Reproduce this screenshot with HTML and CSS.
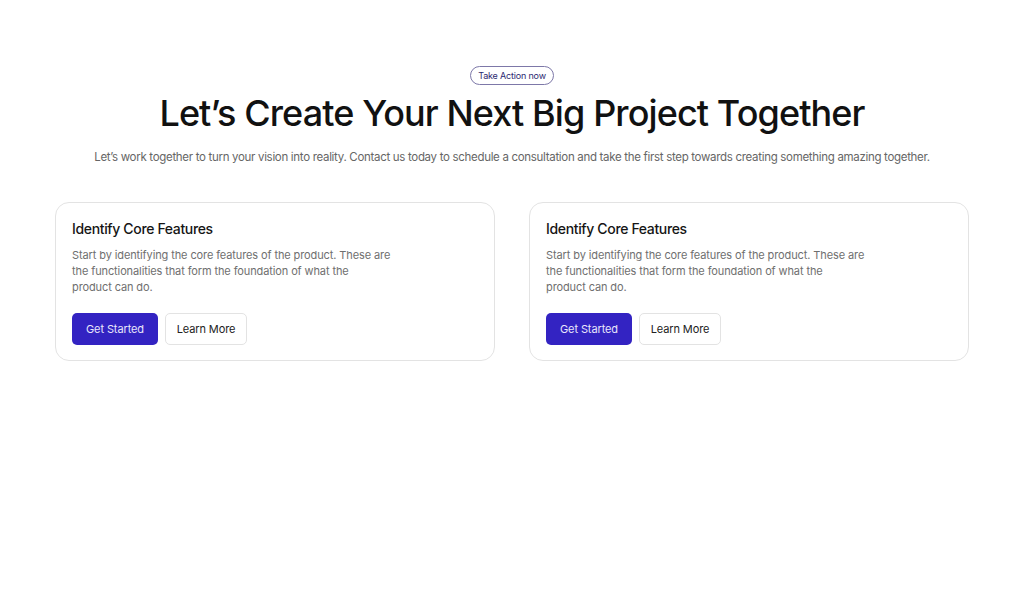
FILE: index.html
```html
<!DOCTYPE html>
<html lang="en">
<head>
<meta charset="utf-8">
<title>Let's Create</title>
<link rel="stylesheet" href="styles.css">
</head>
<body>
<main class="page">
  <section class="hero">
    <span class="badge">Take Action now</span>
    <h1 class="title">Let’s Create Your Next Big Project Together</h1>
    <p class="lead">Let’s work together to turn your vision into reality. Contact us today to schedule a consultation and take the first step towards creating something amazing together.</p>
  </section>
  <section class="cards">
    <article class="card">
      <h2 class="card-title">Identify Core Features</h2>
      <p class="card-text">Start by identifying the core features of the product. These are the functionalities that form the foundation of what the<br>product can do.</p>
      <div class="actions">
        <a class="btn btn-primary" href="#">Get Started</a>
        <a class="btn btn-outline" href="#">Learn More</a>
      </div>
    </article>
    <article class="card">
      <h2 class="card-title">Identify Core Features</h2>
      <p class="card-text">Start by identifying the core features of the product. These are the functionalities that form the foundation of what the<br>product can do.</p>
      <div class="actions">
        <a class="btn btn-primary" href="#">Get Started</a>
        <a class="btn btn-outline" href="#">Learn More</a>
      </div>
    </article>
  </section>
</main>
</body>
</html>
```
FILE: styles.css
```css
* { box-sizing: border-box; }
html, body { margin: 0; padding: 0; background: #fff; }
body {
  font-family: "Inter", "Liberation Sans", sans-serif;
  color: #111;
}
.page {
  padding: 66px 55px 0;
}
.hero {
  display: flex;
  flex-direction: column;
  align-items: center;
  text-align: center;
}
.badge {
  display: inline-block;
  font-size: 9px;
  line-height: 17px;
  height: 19px;
  padding: 0 7px;
  border: 1px solid #7d78a8;
  border-radius: 10px;
  color: #2b2870;
  letter-spacing: -0.02em;
}
.title {
  margin: 6px 0 0;
  font-size: 36px;
  line-height: 44px;
  font-weight: 500;
  letter-spacing: -0.025em;
  color: #111;
}
.lead {
  margin: 14px 0 0;
  font-size: 11.5px;
  line-height: 16px;
  color: #666;
  letter-spacing: -0.027em;
}
.cards {
  margin-top: 37px;
  display: grid;
  grid-template-columns: 1fr 1fr;
  gap: 34px;
}
.card {
  border: 1px solid #e3e3e3;
  border-radius: 14px;
  padding: 16px 16px 16px;
  height: 159px;
}
.card-title {
  margin: 0;
  font-size: 14px;
  line-height: 20px;
  font-weight: 500;
  letter-spacing: -0.025em;
  color: #151515;
}
.card-text {
  margin: 8px 0 0;
  max-width: 330px;
  font-size: 11px;
  line-height: 16px;
  color: #6f6f6f;
  letter-spacing: -0.01em;
}
.actions {
  margin-top: 18px;
  display: flex;
  gap: 7px;
}
.btn {
  display: inline-flex;
  align-items: center;
  justify-content: center;
  height: 32px;
  padding: 0 10px;
  border-radius: 5px;
  font-size: 11px;
  text-decoration: none;
  white-space: nowrap;
  letter-spacing: -0.01em;
}
.btn-primary {
  background: #3323c2;
  color: #e8e6fb;
  width: 86px;
}
.btn-outline {
  background: #fff;
  color: #222;
  border: 1px solid #e3e3e3;
  width: 82px;
}
```
